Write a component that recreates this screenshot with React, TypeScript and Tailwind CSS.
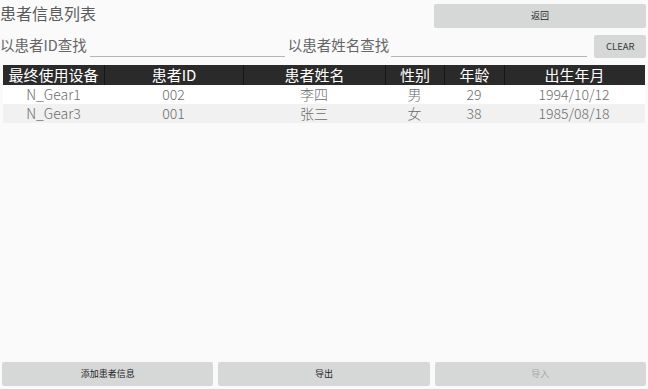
import React from 'react';

const font = { fontFamily: '"Noto Sans CJK SC", "Noto Sans", sans-serif' };

const patients = [
  { device: 'N_Gear1', id: '002', name: '李四', sex: '男', age: '29', birth: '1994/10/12' },
  { device: 'N_Gear3', id: '001', name: '张三', sex: '女', age: '38', birth: '1985/08/18' },
];

const cols = ['w-[101px]', 'w-[139px]', 'w-[142px]', 'w-[59px]', 'w-[60px]', 'w-[140px]'];
const heads = ['最终使用设备', '患者ID', '患者姓名', '性别', '年龄', '出生年月'];

function Btn({ label, disabled }: { label: string; disabled?: boolean }) {
  return (
    <div
      className={`h-[24px] flex items-center justify-center bg-[#d6d7d7] rounded-[2px] text-[9px] ${
        disabled ? 'text-[#a8a8a8]' : 'text-[#1f1f1f]'
      }`}
    >
      {label}
    </div>
  );
}

export default function App() {
  return (
    <div className="w-[648px] h-[389px] bg-[#fafafa] flex flex-col overflow-hidden" style={font}>
      {/* Top */}
      <div className="flex h-[31px] shrink-0">
        <div className="flex-1 text-[16px] leading-[22px] pt-[2px] text-[#5c5c5c] whitespace-nowrap">患者信息列表</div>
        <div className="w-[212px] mr-[2px] mt-[4px]">
          <Btn label="返回" />
        </div>
      </div>

      {/* Search */}
      <div className="flex h-[31px] items-start shrink-0 whitespace-nowrap">
        <div className="flex items-end h-[25px] text-[14.5px] text-[#666] leading-[20px] shrink-0">
          <span className="pb-[1px]">以患者ID查找</span>
          <div className="ml-[3px] w-[195px] border-b border-[#b5b5b5] -mb-[1px]" />
        </div>
        <div className="flex items-end h-[25px] text-[14.5px] text-[#666] leading-[20px] ml-[3px] shrink-0">
          <span className="pb-[1px]">以患者姓名查找</span>
          <div className="ml-[2px] w-[196px] border-b border-[#b5b5b5] -mb-[1px]" />
        </div>
        <div className="ml-[7px] mt-[4px] w-[52px] h-[23px] shrink-0 bg-[#d6d7d7] rounded-[2px] flex items-center justify-center text-[9.5px] text-[#3a3a3a]">
          CLEAR
        </div>
      </div>

      {/* Table */}
      <div className="mx-[3px] mt-[3px] whitespace-nowrap">
        <div className="flex h-[20px] bg-[#2a2a2a] text-white text-[15px] leading-[20px]">
          {heads.map((h, i) => (
            <div
              key={h}
              className={`${cols[i]} text-center ${i > 0 ? 'border-l border-[#151515]' : ''}`}
            >
              {h}
            </div>
          ))}
        </div>
        {patients.map((p, r) => (
          <div
            key={p.id}
            className={`flex h-[19px] text-[14px] leading-[19px] font-light text-[#6c6c6c] ${
              r % 2 === 0 ? 'bg-white' : 'bg-[#f1f1f1]'
            }`}
          >
            {[p.device, p.id, p.name, p.sex, p.age, p.birth].map((v, i) => (
              <div key={i} className={`${cols[i]} text-center`}>
                {v}
              </div>
            ))}
          </div>
        ))}
      </div>

      <div className="flex-1" />

      {/* Bottom */}
      <div className="grid grid-cols-3 gap-[5px] px-[2px] mb-[3px]">
        <Btn label="添加患者信息" />
        <Btn label="导出" />
        <Btn label="导入" disabled />
      </div>
    </div>
  );
}
